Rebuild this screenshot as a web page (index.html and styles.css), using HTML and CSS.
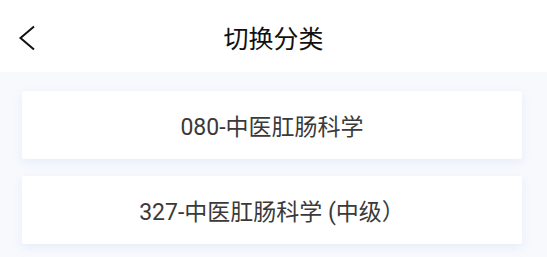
FILE: index.html
```html
<!DOCTYPE html>
<html lang="zh-CN">
<head>
<meta charset="utf-8">
<link rel="stylesheet" href="styles.css">
</head>
<body>
<header class="nav">
  <button class="back" aria-label="返回">
    <svg width="18" height="26" viewBox="0 0 18 26"><path d="M16 1.5 L2.5 13 L16 24.5" fill="none" stroke="#111" stroke-width="2"/></svg>
  </button>
  <h1 class="title">切换分类</h1>
</header>
<main class="list">
  <div class="card">080-中医肛肠科学</div>
  <div class="card">327-中医肛肠科学 (中级）</div>
</main>
</body>
</html>
```
FILE: styles.css
```css
* { box-sizing: border-box; }
html, body { margin: 0; padding: 0; }
body {
  width: 547px;
  height: 257px;
  overflow: hidden;
  background: #f7f9fd;
  font-family: Roboto, "Noto Sans CJK SC", sans-serif;
}
.nav {
  height: 72px;
  background: #fff;
  display: flex;
  align-items: center;
  justify-content: center;
  position: relative;
}
.back {
  position: absolute;
  left: 18px;
  top: 25px;
  padding: 0;
  border: 0;
  background: none;
  display: flex;
}
.title {
  margin: 0;
  padding-top: 2px;
  font-size: 25px;
  font-weight: 400;
  color: #111;
  letter-spacing: 0;
}
.list {
  padding: 19px 25px 0 22px;
  display: flex;
  flex-direction: column;
  gap: 17px;
}
.card {
  height: 68px;
  background: #fff;
  border-radius: 2px;
  box-shadow: 0 3px 10px rgba(200, 215, 240, 0.35);
  display: flex;
  align-items: center;
  justify-content: center;
  font-size: 23px;
  color: #3a3a3a;
}
```
